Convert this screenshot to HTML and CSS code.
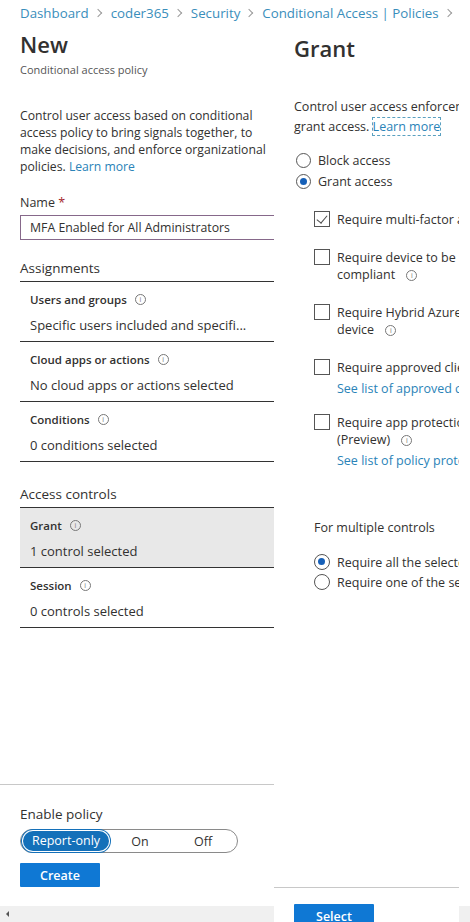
FILE: index.html
```html
<!DOCTYPE html>
<html lang="en">
<head>
    <meta charset="UTF-8">
    <meta name="viewport" content="width=device-width, initial-scale=1.0">
    <title>New - Conditional access policy</title>
    <link rel="stylesheet" href="styles.css">
</head>
<body>
    <nav class="breadcrumb">
        <a href="#">Dashboard</a><span class="crumb-sep"></span>
        <a href="#">coder365</a><span class="crumb-sep"></span>
        <a href="#">Security</a><span class="crumb-sep"></span>
        <a href="#">Conditional Access | Policies</a><span class="crumb-sep"></span>
    </nav>

    <div class="blades">
        <!-- left blade: the policy -->
        <div class="left-col">
            <section class="blade policy-blade">
                <div class="blade-body">
                    <h1>New</h1>
                    <p class="subtitle">Conditional access policy</p>

                    <p class="intro">Control user access based on conditional access policy to bring signals together, to make decisions, and enforce organizational policies. <a href="#">Learn more</a></p>

                    <label class="field-label">Name <span class="req">*</span></label>
                    <div class="text-input">MFA Enabled for All Administrators</div>

                    <h2 class="group-title">Assignments</h2>
                    <div class="row">
                        <div class="row-label">Users and groups <span class="info">i</span></div>
                        <div class="row-value">Specific users included and specifi...</div>
                    </div>
                    <div class="row">
                        <div class="row-label">Cloud apps or actions <span class="info">i</span></div>
                        <div class="row-value">No cloud apps or actions selected</div>
                    </div>
                    <div class="row">
                        <div class="row-label">Conditions <span class="info">i</span></div>
                        <div class="row-value">0 conditions selected</div>
                    </div>

                    <h2 class="group-title spaced">Access controls</h2>
                    <div class="row selected">
                        <div class="row-label">Grant <span class="info">i</span></div>
                        <div class="row-value">1 control selected</div>
                    </div>
                    <div class="row">
                        <div class="row-label">Session <span class="info">i</span></div>
                        <div class="row-value">0 controls selected</div>
                    </div>
                </div>

                <div class="blade-footer">
                    <div class="footer-label">Enable policy</div>
                    <div class="pill-toggle">
                        <span class="pill-option active">Report-only</span>
                        <span class="pill-option on">On</span>
                        <span class="pill-option off">Off</span>
                    </div>
                    <button class="primary-btn">Create</button>
                </div>
            </section>
            <div class="hscroll"><span class="arrow-left"></span></div>
        </div>

        <!-- right blade: grant -->
        <section class="blade grant-blade">
            <div class="blade-body">
                <h1 class="grant-title">Grant</h1>
                <p class="grant-intro">Control user access enforcement to block or<br>grant access. <a href="#" class="focus-link">Learn more</a></p>

                <div class="radio-group">
                    <div class="radio-line"><span class="radio"></span>Block access</div>
                    <div class="radio-line"><span class="radio checked"></span>Grant access</div>
                </div>

                <ul class="checks">
                    <li>
                        <span class="checkbox checked"></span>
                        <div class="check-text">Require multi-factor authentication</div>
                    </li>
                    <li>
                        <span class="checkbox"></span>
                        <div class="check-text">Require device to be marked as<br>compliant <span class="info">i</span></div>
                    </li>
                    <li>
                        <span class="checkbox"></span>
                        <div class="check-text">Require Hybrid Azure AD joined<br>device <span class="info">i</span></div>
                    </li>
                    <li class="with-link">
                        <span class="checkbox"></span>
                        <div class="check-text">Require approved client app <span class="info">i</span>
                            <a href="#" class="sub-link">See list of approved client apps</a>
                        </div>
                    </li>
                    <li class="with-link">
                        <span class="checkbox"></span>
                        <div class="check-text">Require app protection policy<br>(Preview) <span class="info">i</span>
                            <a href="#" class="sub-link">See list of policy protected client apps</a>
                        </div>
                    </li>
                </ul>

                <div class="multi">
                    <div class="multi-label">For multiple controls</div>
                    <div class="radio-line small"><span class="radio checked"></span>Require all the selected controls</div>
                    <div class="radio-line small"><span class="radio"></span>Require one of the selected controls</div>
                </div>
            </div>
            <div class="grant-footer">
                <button class="primary-btn">Select</button>
            </div>
        </section>

        <div class="edge-col">
            <div class="hscroll"></div>
        </div>
    </div>
</body>
</html>
```

FILE: styles.css
```css
* {
    box-sizing: border-box;
}

body {
    margin: 0;
    width: 470px;
    height: 922px;
    overflow: hidden;
    font-family: "Segoe UI", "Open Sans", "Noto Sans", sans-serif;
    color: #323130;
    background: #ffffff;
}

a {
    color: #2a83b8;
    text-decoration: none;
}

.breadcrumb {
    height: 26px;
    padding-left: 20px;
    display: flex;
    align-items: center;
    font-size: 13.3px;
    white-space: nowrap;
}

.breadcrumb a {
    color: #3a8ebb;
}

.crumb-sep {
    width: 6px;
    height: 6px;
    margin: 0 10px 0 6px;
    border-top: 1px solid #9a9a9a;
    border-right: 1px solid #9a9a9a;
    transform: rotate(45deg);
}

.blades {
    display: flex;
    height: 896px;
}

.left-col {
    width: 274px;
    display: flex;
    flex-direction: column;
}

.blade {
    display: flex;
    flex-direction: column;
    overflow: hidden;
}

.policy-blade {
    height: 880px;
}

.blade-body {
    padding-left: 20px;
    flex: 1;
}

h1 {
    margin: 4px 0 0;
    font-size: 22px;
    line-height: 28px;
    font-weight: 600;
}

.subtitle {
    margin: 5px 0 0;
    font-size: 11px;
    line-height: 14px;
    color: #555;
}

.intro {
    margin: 30px 0 0;
    font-size: 12.2px;
    line-height: 17px;
}

.field-label {
    display: block;
    margin-top: 20px;
    font-size: 12.5px;
    line-height: 16px;
}

.req {
    color: #a4262c;
}

.text-input {
    width: 268px;
    height: 25px;
    margin-top: 4px;
    padding-left: 9px;
    border: 1px solid #86688a;
    font-size: 12.3px;
    line-height: 23px;
    white-space: nowrap;
}

.group-title {
    margin: 19px 0 0;
    padding-bottom: 4px;
    border-bottom: 1px solid #333;
    font-size: 13.5px;
    line-height: 18px;
    font-weight: 400;
}

.group-title.spaced {
    margin-top: 23px;
}

.row {
    height: 60px;
    padding: 9px 0 0 10px;
    border-bottom: 1px solid #333;
}

.row.selected {
    background: #e8e8e8;
}

.row-label {
    display: flex;
    align-items: center;
    height: 16px;
    font-size: 11.5px;
    font-weight: 600;
}

.row-value {
    margin-top: 9px;
    font-size: 13px;
    line-height: 18px;
    white-space: nowrap;
}

.info {
    display: inline-flex;
    align-items: center;
    justify-content: center;
    width: 11px;
    height: 11px;
    margin-left: 8px;
    border: 1px solid #777;
    border-radius: 50%;
    font-size: 7px;
    font-weight: 400;
    line-height: 1;
    color: #777;
    vertical-align: middle;
}

.blade-footer {
    padding: 20px 0 19px 20px;
    border-top: 1px solid #c8c8c8;
}

.footer-label {
    font-size: 13.5px;
    line-height: 18px;
}

.pill-toggle {
    width: 218px;
    height: 24px;
    margin-top: 6px;
    padding: 1px;
    border: 1px solid #8a8a8a;
    border-radius: 12px;
    display: flex;
    align-items: center;
    font-size: 12.5px;
}

.pill-option {
    text-align: center;
}

.pill-option.active {
    flex: 0 0 86px;
    height: 20px;
    line-height: 20px;
    border-radius: 10px;
    background: #1470b9;
    color: #fff;
    box-shadow: 0 0 0 1px #fff, 0 0 0 2px #1470b9;
    margin-left: 1px;
}

.pill-option.on {
    flex: 0 0 62px;
}

.pill-option.off {
    flex: 0 0 64px;
}

.primary-btn {
    display: block;
    width: 80px;
    height: 24px;
    margin-top: 10px;
    border: none;
    border-radius: 1px;
    background: #0f78d4;
    color: #fff;
    font-family: inherit;
    font-size: 12.5px;
    font-weight: 600;
    padding: 0;
}

.hscroll {
    height: 16px;
    background: #f0f0f0;
    position: relative;
}

.arrow-left {
    position: absolute;
    left: 6px;
    top: 5px;
    border-top: 3px solid transparent;
    border-bottom: 3px solid transparent;
    border-right: 3px solid #555;
}

/* grant blade */

.grant-blade {
    width: 185px;
    height: 896px;
}

.grant-blade .blade-body {
    overflow: hidden;
}

.grant-title {
    margin-top: 8px;
}

.grant-intro {
    margin: 35px 0 0;
    font-size: 12.5px;
    line-height: 20px;
    white-space: nowrap;
}

.focus-link {
    outline: 1px dashed #5aa0c0;
    outline-offset: 0;
}

.radio-group {
    margin-top: 13px;
    margin-left: 2px;
}

.radio-line {
    display: flex;
    align-items: center;
    height: 21px;
    font-size: 12.5px;
    white-space: nowrap;
}

.radio {
    width: 15px;
    height: 15px;
    flex: none;
    margin-right: 7px;
    border: 1px solid #555;
    border-radius: 50%;
    background: #fff;
    position: relative;
}

.radio.checked::after {
    content: "";
    position: absolute;
    left: 3px;
    top: 3px;
    width: 7px;
    height: 7px;
    border-radius: 50%;
    background: #1660b8;
}

.checks {
    list-style: none;
    margin: 19px 0 0;
    padding: 0 0 0 20px;
    font-size: 12.5px;
    line-height: 17px;
}

.checks li {
    display: flex;
    align-items: flex-start;
    margin-bottom: 21px;
}

.checks li.with-link {
    margin-bottom: 17px;
}

.checks li:last-child {
    margin-bottom: 0;
}

.checkbox {
    width: 16px;
    height: 16px;
    flex: none;
    margin-right: 7px;
    border: 1px solid #555;
    position: relative;
}

.checkbox.checked::after {
    content: "";
    position: absolute;
    left: 4px;
    top: 1px;
    width: 5px;
    height: 9px;
    border-right: 1px solid #4a4a4a;
    border-bottom: 1px solid #4a4a4a;
    transform: rotate(40deg);
}

.check-text {
    white-space: nowrap;
}

.sub-link {
    display: block;
    margin-top: 4px;
}

.multi {
    margin-top: 50px;
    padding-left: 20px;
}

.multi-label {
    font-size: 12.5px;
    line-height: 17px;
    margin-bottom: 16px;
}

.radio-line.small {
    height: 20px;
}

.radio-line.small .radio {
    width: 16px;
    height: 16px;
}

.grant-footer {
    height: 35px;
    margin-top: auto;
    border-top: 1px solid #c8c8c8;
    padding: 16px 0 0 20px;
}

.grant-footer .primary-btn {
    margin-top: 0;
}

.edge-col {
    width: 11px;
    display: flex;
    flex-direction: column;
    justify-content: flex-end;
}
```
